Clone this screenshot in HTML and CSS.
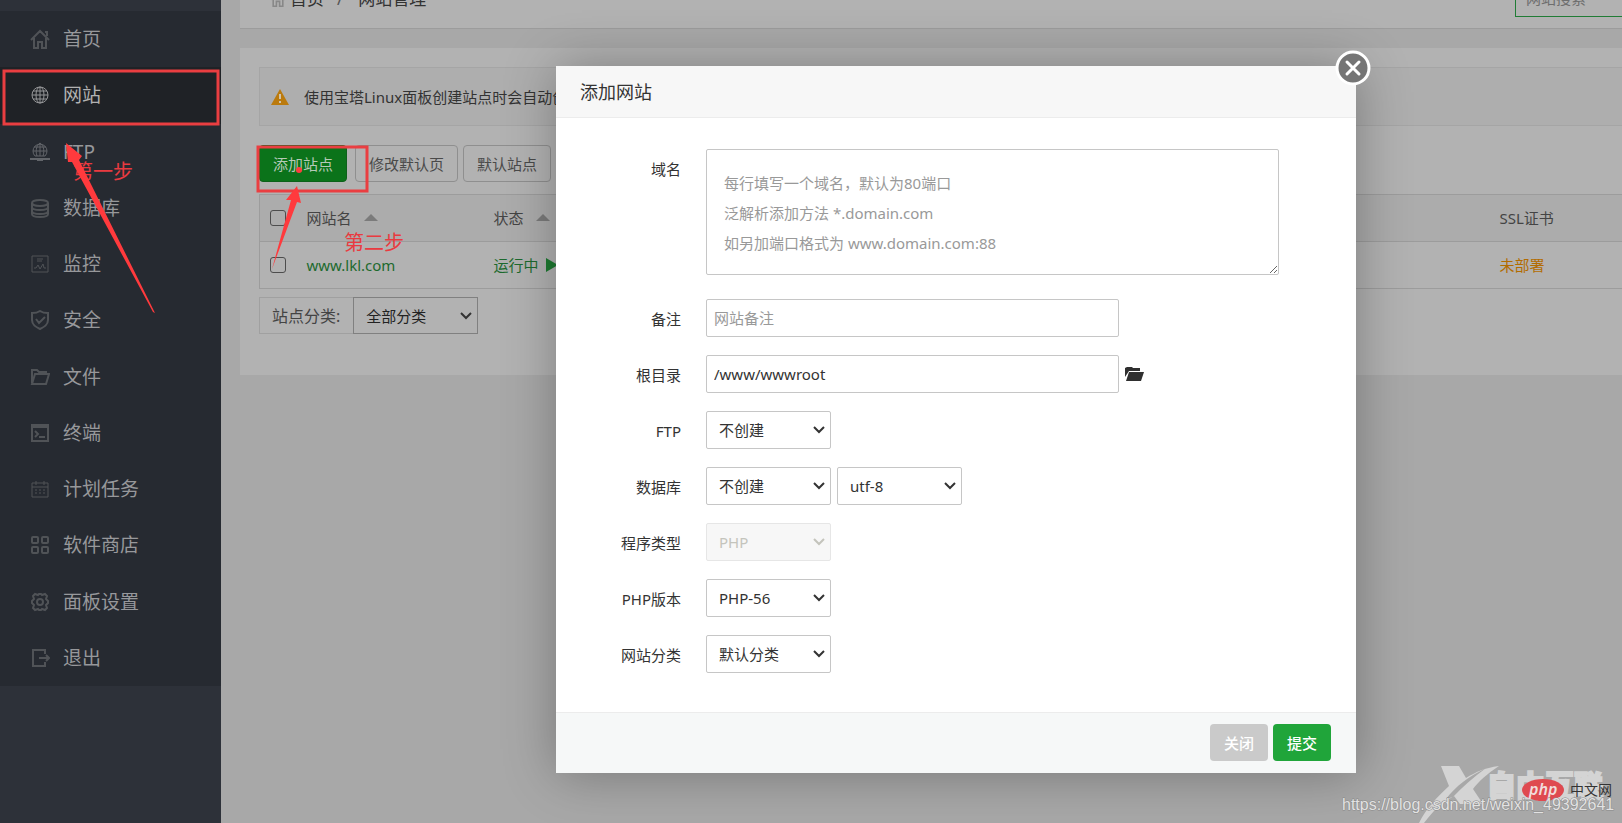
FILE: index.html
```html
<!DOCTYPE html>
<html lang="zh-CN">
<head>
<meta charset="utf-8">
<title>网站管理</title>
<link rel="stylesheet" href="styles.css">
</head>
<body>
<div class="app">
  <nav class="sidebar">
    <ul class="menu">
      <li><a href="#"><svg class="icon" viewBox="0 0 20 20"><path d="M1 11 10 2l9 9M4 9v10h4v-6h4v6h4V9M15 3h2v4"/></svg>首页</a></li>
      <li><a href="#" class="active"><svg class="icon" viewBox="0 0 20 20"><circle cx="10" cy="10" r="8"/><ellipse cx="10" cy="10" rx="4" ry="8"/><path d="M10 2v16M2 10h16M3 6h14M3 14h14"/></svg>网站</a></li>
      <li><a href="#"><svg class="icon globe" viewBox="0 0 20 20"><path d="M5 14a7 7 0 1 1 10 0zM10 1v13M3 9h14M4 5h12M7 14C5 8 7 3 10 1c3 2 5 7 3 13"/><path class="base" d="M0 17h20M7 18h6"/></svg>FTP</a></li>
      <li><a href="#"><svg class="icon" viewBox="0 0 20 20"><ellipse cx="10" cy="5" rx="8" ry="3"/><path d="M2 5v11c0 4 16 4 16 0V5M2 9c0 4 16 4 16 0M2 13c0 4 16 4 16 0"/></svg>数据库</a></li>
      <li><a href="#"><svg class="icon thin" viewBox="0 0 20 20"><path d="M2 2h16v16H2zM4 14h2l2-3 2 4 3-5 1 4h2M7 5h6M7 7h5"/></svg>监控</a></li>
      <li><a href="#"><svg class="icon" viewBox="0 0 20 20"><path d="M10 1c3 2 5 2 8 2v7c0 5-4 7-8 9-4-2-8-4-8-9V3c3 0 5 0 8-2zM6 9l3 4 6-6"/></svg>安全</a></li>
      <li><a href="#"><svg class="icon" viewBox="0 0 20 20"><path d="M2 16V3h5l2 2h7v2M2 17 5 7h14l-3 10z"/></svg>文件</a></li>
      <li><a href="#"><svg class="icon" viewBox="0 0 20 20"><path d="M2 2h16v16H2zM2 4h16M5 8l3 3-3 3M9 14h6"/></svg>终端</a></li>
      <li><a href="#"><svg class="icon thin" viewBox="0 0 20 20"><path d="M2 4h16v14H2zM2 8h16M6 2v4M14 2v4M5 11h2M9 11h2M13 11h2M5 14h2M9 14h2M13 14h2"/></svg>计划任务</a></li>
      <li><a href="#"><svg class="icon" viewBox="0 0 20 20"><rect x="2" y="2" width="6" height="6" rx="1"/><rect x="12" y="2" width="6" height="6" rx="1"/><rect x="2" y="12" width="6" height="6" rx="1"/><rect x="12" y="12" width="6" height="6" rx="1"/></svg>软件商店</a></li>
      <li><a href="#"><svg class="icon" viewBox="0 0 20 20"><path d="m8 3 1-1h2l1 1 3-1 2 2-1 3 2 2v2l-2 2 1 3-2 2-3-1-1 1H9l-1-1-3 1-2-2 1-3-2-2V9l2-2-1-3 2-2z"/><circle cx="10" cy="10" r="3"/></svg>面板设置</a></li>
      <li><a href="#"><svg class="icon" viewBox="0 0 20 20"><path d="M15 6V2H3v16h12v-4M9 10h10M16 7l3 3-3 3"/></svg>退出</a></li>
    </ul>
  </nav>

  <main class="main">
    <header class="topbar">
      <div class="crumbs"><svg class="crumb-icon" viewBox="0 0 20 20"><path d="M1 11 10 2l9 9M4 9v10h4v-6h4v6h4V9"/></svg><a href="#">首页</a><span class="slash">/</span><span>网站管理</span></div>
      <input class="search" type="text" placeholder="网站搜索" aria-label="网站搜索">
    </header>

    <section class="panel">
      <div class="notice">
        <svg class="warn" viewBox="0 0 18 16"><path d="M9 0 18 16H0z"/><path class="mark" d="M8 5h2v5H8zM8 12h2v2H8z"/></svg>
        <span>使用宝塔Linux面板创建站点时会自动创建权限</span>
      </div>
      <div class="toolbar">
        <button class="btn primary" type="button">添加站点</button>
        <button class="btn" type="button">修改默认页</button>
        <button class="btn" type="button">默认站点</button>
        <button class="btn" type="button">分类管理</button>
      </div>
      <table class="sites">
        <thead>
          <tr><th class="c-check"><input type="checkbox" aria-label="全选"></th><th class="c-name">网站名<span class="sort"></span></th><th class="c-state">状态<span class="sort"></span></th><th class="c-ssl">SSL证书</th></tr>
        </thead>
        <tbody>
          <tr><td class="c-check"><input type="checkbox" aria-label="www.lkl.com"></td><td><a class="ok" href="#">www.lkl.com</a></td><td><a class="ok" href="#">运行中<span class="play"></span></a></td><td><a class="unset" href="#">未部署</a></td></tr>
        </tbody>
      </table>
      <div class="filter">
        <label for="site-type">站点分类:</label>
        <select id="site-type"><option>全部分类</option></select>
      </div>
    </section>
  </main>
</div>

<div class="modal" role="dialog" aria-labelledby="dlg-title">
  <button class="close" type="button" aria-label="关闭窗口"><svg viewBox="0 0 36 36"><circle cx="18" cy="18" r="16"/><path d="m12 12 12 12M24 12 12 24"/></svg></button>
  <h2 class="modal-title" id="dlg-title">添加网站</h2>
  <form class="form">
    <div class="row tall"><label for="domain">域名</label><textarea id="domain" placeholder="每行填写一个域名，默认为80端口&#10;泛解析添加方法 *.domain.com&#10;如另加端口格式为 www.domain.com:88"></textarea></div>
    <div class="row"><label for="note">备注</label><input id="note" type="text" placeholder="网站备注"></div>
    <div class="row"><label for="root">根目录</label><input id="root" type="text" value="/www/wwwroot"><svg class="folder" viewBox="0 0 19 15"><path d="M0 10V1l2-1h5l1 1h7v3H4z"/><path d="M4 5h15l-3 9H1z"/></svg></div>
    <div class="row"><label for="ftp">FTP</label><select id="ftp"><option>不创建</option></select></div>
    <div class="row"><label for="db">数据库</label><select id="db"><option>不创建</option></select><select aria-label="字符集"><option>utf-8</option></select></div>
    <div class="row"><label for="kind">程序类型</label><select id="kind" disabled><option>PHP</option></select></div>
    <div class="row"><label for="php">PHP版本</label><select id="php"><option>PHP-56</option></select></div>
    <div class="row"><label for="cat">网站分类</label><select id="cat"><option>默认分类</option></select></div>
  </form>
  <footer class="modal-foot">
    <button class="act cancel" type="button">关闭</button>
    <button class="act submit" type="button">提交</button>
  </footer>
</div>

<svg class="marks">
  <rect x="4" y="71" width="214" height="53"/>
  <rect x="258" y="147" width="109" height="44"/>
  <text x="73" y="179">第一步</text>
  <text x="344" y="250">第二步</text>
  <path d="M66 143 82 156 79 160 155 313 153 312 72 162 68 162z"/>
  <path d="M297 186 301 203 297 202 272 269 291 200 286 200z"/>
  <circle cx="299" cy="170" r="3"/>
</svg>

<svg class="watermark" viewBox="0 0 290 70">
  <path class="logo" d="M109 13h18l7 12c10-6 18-10 33-12-12 8-20 15-26 23l10 15h-23l-6-8c-14 8-20 14-30 27h-5c7-14 18-26 30-37z"/>
  <path class="cut" d="M114 46c10-13 22-22 40-31-13 10-24 19-33 29z"/>
  <text class="brand" x="155" y="44">自由互联</text>
  <ellipse cx="211" cy="37" rx="21" ry="11"/>
  <text class="php" x="197" y="42">php</text>
  <text class="cn" x="238" y="42">中文网</text>
  <text class="url" x="10" y="57">https://blog.csdn.net/weixin_49392641</text>
</svg>
</body>
</html>
```
FILE: styles.css
```css
* { box-sizing: border-box; }
body {
  margin: 0;
  background: #a8a8a8;
  color: #333;
  font: 15px/20px "Noto Sans", "Noto Sans CJK SC", sans-serif;
}
button, input, select, textarea { font: inherit; color: inherit; }
a { color: inherit; text-decoration: none; }
select {
  appearance: none;
  width: 125px;
  height: 38px;
  padding: 0 24px 0 12px;
  background: #fff url("data:image/svg+xml,%3Csvg xmlns='http://www.w3.org/2000/svg' width='12' height='8' fill='none' stroke='%23333' stroke-width='2'%3E%3Cpath d='m1 1 5 5 5-5'/%3E%3C/svg%3E") no-repeat right 5px center;
}

.app { display: flex; height: 100vh; overflow: hidden; }

/* Sidebar */
.sidebar { flex: 0 0 221px; padding-top: 11px; background: #2d3139; }
.menu {
  display: grid;
  grid-auto-rows: 1fr;
  min-height: 675px;
  margin: 0;
  padding: 0;
  list-style: none;
  background: #262a31;
}
.menu a {
  display: flex;
  align-items: center;
  gap: 13px;
  height: 100%;
  padding-left: 30px;
  color: #97989b;
  font-size: 19px;
}
.menu .active { background: #1f2226; color: #b2b2b2; }
.icon { width: 20px; height: 20px; fill: none; stroke: #505357; stroke-width: 2; }
.icon.thin { stroke-width: 1; }
.icon.globe { stroke-width: 1; stroke: #62656a; }
.globe .base { stroke-width: 2; }
.active .icon { stroke: #949597; stroke-width: 1; }

/* Page */
.main { flex: 1; min-width: 0; padding-left: 19px; overflow: hidden; }
.topbar {
  display: flex;
  justify-content: space-between;
  align-items: center;
  height: 61px;
  margin-top: -32px;
  padding-left: 30px;
  background: #b2b2b2;
  border-bottom: 1px solid #9c9c9c;
}
.crumbs { display: flex; align-items: center; padding-top: 2px; font-size: 17px; }
.crumb-icon { width: 16px; height: 16px; margin-right: 4px; fill: none; stroke: #888; stroke-width: 2; }
.slash { margin: 0 15px 0 13px; color: #555; }
.search {
  width: 140px;
  height: 38px;
  margin-right: -33px;
  padding: 0 10px;
  border: 1px solid #207c35;
  background: #b2b2b2;
}
.search::placeholder { color: #6e6e6e; }

.panel { margin: 19px -30px 0 0; padding: 19px 0 41px 19px; background: #b2b2b2; }
.notice {
  display: flex;
  align-items: center;
  gap: 15px;
  height: 59px;
  padding-left: 11px;
  background: #aeaeae;
  border: 1px solid #a5a5a5;
}
.warn { width: 18px; height: 16px; fill: #bb7a0d; }
.warn .mark { fill: #d0c3ac; }
.toolbar { display: flex; gap: 5px; margin: 19px 0 12px; }
.btn {
  height: 37px;
  padding: 0 13px;
  border: 1px solid #8f8f8f;
  border-radius: 4px;
  background: #b2b2b2;
  color: #4a4a4a;
}
.btn.primary { margin-right: 3px; border-color: #0d611a; background: #0b731a; color: #b5c9b7; }

.sites { width: 100%; border-collapse: collapse; table-layout: fixed; border: 1px solid #9c9c9c; }
.sites th, .sites td { height: 47px; padding: 0; border-bottom: 1px solid #9c9c9c; text-align: left; font-weight: 400; }
.sites th { background: #acacac; color: #444; }
.sites .c-check { width: 47px; padding-left: 10px; }
.c-name { width: 187px; }
.c-ssl { width: 152px; }
.sites input {
  appearance: none;
  display: block;
  width: 16px;
  height: 16px;
  margin: 0;
  border: 1px solid #4d4d4d;
  border-radius: 3px;
}
.sort {
  display: inline-block;
  margin-left: 12px;
  border: solid transparent;
  border-width: 0 7px 7px;
  border-bottom-color: #7b7b7b;
  vertical-align: 3px;
}
.play {
  display: inline-block;
  margin-left: 7px;
  border: solid transparent;
  border-width: 7px 0 7px 12px;
  border-left-color: #1d7a31;
  vertical-align: -1px;
}
.ok { color: #1d6a2e; }
.unset { color: #b26c00; }
.filter { display: flex; height: 37px; margin-top: 8px; }
.filter label {
  display: flex;
  align-items: center;
  padding: 0 13px 0 12px;
  border: 1px solid #a0a0a0;
  border-right: 0;
  color: #444;
  font-size: 16px;
}
.filter select { height: 100%; border: 1px solid #808080; border-radius: 0; background-color: #b2b2b2; color: #222; }

/* Dialog */
.modal {
  position: absolute;
  top: 66px;
  left: 556px;
  width: 800px;
  background: #fff;
  box-shadow: 1px 1px 50px rgba(0, 0, 0, .3);
}
.modal-title {
  margin: 0;
  padding: 16px 24px 15px;
  background: #f7f7f7;
  border-bottom: 1px solid #ececec;
  font-size: 18px;
  font-weight: 400;
}
.close {
  position: absolute;
  top: -16px;
  right: -15px;
  width: 36px;
  height: 36px;
  padding: 0;
  border: 0;
  background: none;
}
.close svg { display: block; fill: #757575; stroke: #fff; stroke-width: 3; stroke-linecap: round; }
.form { display: flex; flex-direction: column; gap: 18px; padding: 31px 77px 39px 0; }
.row { display: flex; align-items: center; gap: 6px; }
.row label { width: 125px; margin-right: 19px; padding-top: 2px; text-align: right; }
.row.tall { align-items: flex-start; margin-bottom: 6px; }
.row.tall label { padding-top: 10px; }
.row input, .row select, .row textarea { border: 1px solid #c6c6c6; border-radius: 2px; }
.row input { width: 413px; height: 38px; padding: 0 7px; }
.row select:disabled {
  border-color: #e6e6e6;
  background-color: #f7f7f7;
  background-image: url("data:image/svg+xml,%3Csvg xmlns='http://www.w3.org/2000/svg' width='12' height='8' fill='none' stroke='%23c4c4bc' stroke-width='2'%3E%3Cpath d='m1 1 5 5 5-5'/%3E%3C/svg%3E");
  color: #c4c4bc;
  opacity: 1;
}
.row textarea { flex: 1; height: 126px; padding: 18px 17px; line-height: 30px; resize: both; overflow: hidden; }
.row ::placeholder { color: #999; }
.folder { width: 19px; height: 15px; fill: #2f2f2f; }
.modal-foot {
  display: flex;
  justify-content: flex-end;
  gap: 5px;
  padding: 11px 25px 12px;
  background: #f6f8f8;
  border-top: 1px solid #ececec;
}
.act { height: 37px; padding: 0 14px; border: 0; border-radius: 4px; color: #fff; font-weight: 500; }
.cancel { background: #cacaca; }
.submit { background: #20a53a; }

/* Step annotations */
.marks { position: absolute; top: 0; left: 0; width: 100%; height: 100%; pointer-events: none; fill: #ff3a3d; }
.marks rect { fill: none; stroke: #ea3e41; stroke-width: 3; }
.marks text { font-size: 20px; fill: #e93a40; }

.watermark { position: absolute; right: 0; bottom: 0; width: 290px; height: 70px; pointer-events: none; }
.logo, .brand { fill: #d4d4d4; }
.cut { fill: #a8a8a8; }
.brand { font-size: 29px; font-weight: 900; stroke: #d4d4d4; stroke-width: 2; }
.watermark ellipse { fill: #df4a50; }
.php { font-size: 16px; font-style: italic; font-weight: 600; fill: #f1dcdc; }
.cn { font-size: 14px; fill: #333; }
.url { font: 16px "Liberation Sans", sans-serif; fill: #e2e2e2; stroke: #888; stroke-width: 1; paint-order: stroke; }
```
